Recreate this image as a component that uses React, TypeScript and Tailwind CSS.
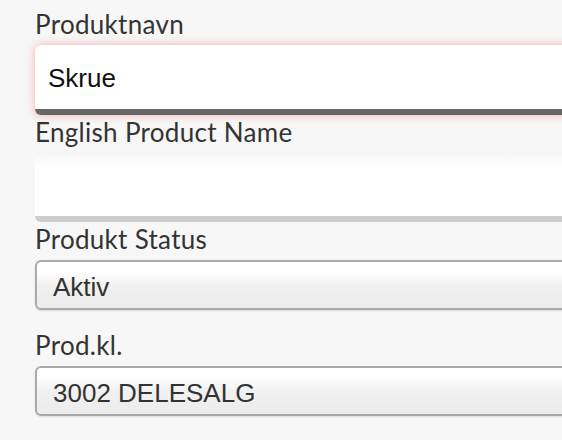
const labelCls =
  "block h-[38px] pt-[3px] text-[26px] leading-[28px] tracking-[0.3px] text-[#333] [font-family:Lato,'Noto_Sans',sans-serif]";

const selectCls =
  "flex h-[50px] w-full items-center rounded-[6px] border-2 border-[#aaa] bg-[linear-gradient(to_bottom,#fff_20%,#f1f1f1_50%,#ececec)] px-[16px] pt-[5px] text-[26px] text-[#333] shadow-[0_1px_2px_rgba(0,0,0,0.12)]";

const Field = ({ label, children }: { label: string; children: React.ReactNode }) => (
  <div>
    <label className={labelCls}>{label}</label>
    {children}
  </div>
);

const App = () => {
  return (
    <div className="h-[440px] w-[562px] overflow-hidden bg-[#f7f7f7]">
      <div className="w-[700px] pl-[35px] pt-[7px] [font-family:'Liberation_Sans',Arial,sans-serif]">
        <Field label="Produktnavn">
          <input
            defaultValue="Skrue"
            className="block h-[70px] w-full rounded-[6px] border-b-[6px] border-[#666] bg-white px-[13px] pt-[3px] text-[26px] text-[#111] shadow-[0_0_8px_rgba(235,100,100,0.5)] outline-none"
          />
        </Field>

        <Field label="English Product Name">
          <input className="block h-[69px] w-full rounded-[6px] border-b-[6px] border-[#ccc] bg-[linear-gradient(to_bottom,#f5f5f5,#fff_12px)] px-[13px] text-[26px] text-[#111] outline-none" />
        </Field>

        <Field label="Produkt Status">
          <div className={selectCls}>Aktiv</div>
        </Field>

        <div className="h-[18px]" />

        <Field label="Prod.kl.">
          <div className={selectCls}>3002 DELESALG</div>
        </Field>
      </div>
    </div>
  );
};

export default App;
